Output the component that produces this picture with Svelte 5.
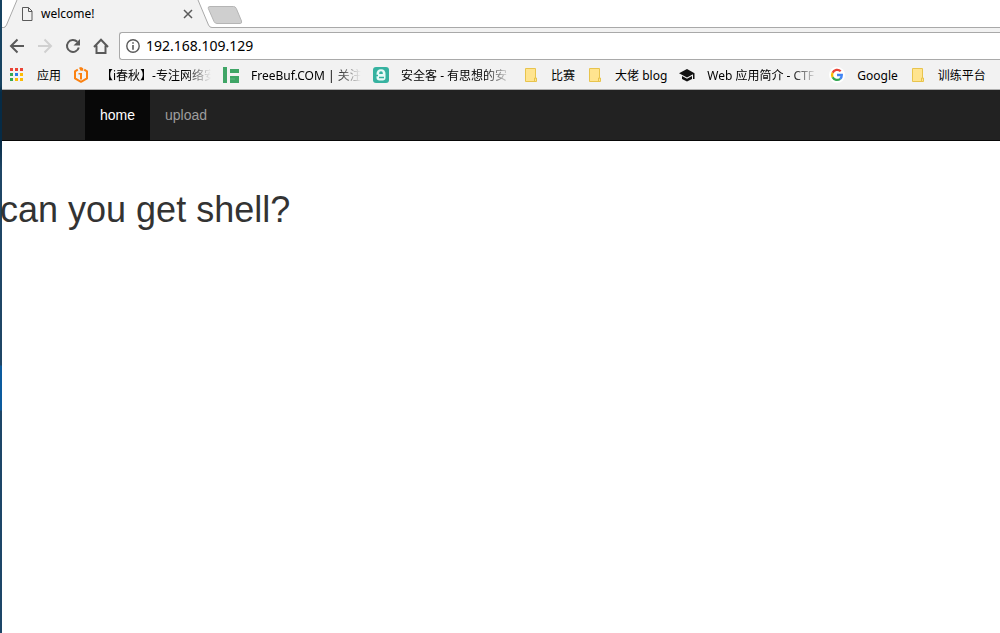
<script>
  const bookmarks = [
    { icon: 'apps', label: '应用' },
    { icon: 'ichunqiu', label: '【i春秋】-专注网络安', long: true },
    { icon: 'freebuf', label: 'FreeBuf.COM | 关注', long: true },
    { icon: 'anquanke', label: '安全客 - 有思想的安', long: true },
    { icon: 'folder', label: '比赛' },
    { icon: 'folder', label: '大佬 blog' },
    { icon: 'cap', label: 'Web 应用简介 - CTF', long: true },
    { icon: 'google', label: 'Google' },
    { icon: 'folder', label: '训练平台' }
  ];
  const dots = ['#ea4335', '#ea4335', '#ea4335', '#34a853', '#2b7de9', '#fbbc05', '#34a853', '#fbbc05', '#fbbc05'];
  let address = $state('192.168.109.129');
</script>

<div class="window">
  <div class="desktop-edge"></div>

  <div class="tabs">
    <svg width="17" height="28" viewBox="0 0 17 28">
      <path d="M0 27.500H1.500Q3.500 27.500 4.500 25L14.500 1Q15 0 17 0V28H0Z" fill="#f2f2f2" />
      <path d="M0 27.500H1.500Q3.500 27.500 4.500 25L15 0" fill="none" stroke="#a9a9a9" />
    </svg>
    <div class="tab">
      <svg width="16" height="16" viewBox="0 0 16 16" fill="none" stroke="#5a5a5a">
        <path d="M3.500 1.500H9.500L13 5V14.500H3.500ZM9.500 1.500V5.500H13" />
      </svg>
      <span class="title">welcome!</span>
      <button aria-label="Close tab">
        <svg width="10" height="10" viewBox="0 0 10 10" stroke="#5a5a5a" stroke-width="1.500"><path d="M1 1L9 9M9 1L1 9" /></svg>
      </button>
    </div>
    <svg width="17" height="28" viewBox="0 0 17 28">
      <path d="M0 0H2L12.500 25Q13.500 27.500 16 27.500H17V28H0Z" fill="#f2f2f2" />
      <path d="M2 0L12.500 25Q13.500 27.500 16 27.500H17" fill="none" stroke="#a9a9a9" />
    </svg>
    <button class="new-tab" aria-label="New tab">
      <svg width="36" height="18" viewBox="0 0 36 18">
        <path d="M3 .5H26.500Q28.500 .5 29.300 2.500L34.500 15Q35.300 17.500 33 17.500H10Q8 17.500 7 15.500L1.300 2.500Q.6 .5 3 .5Z" fill="#cfcfcf" stroke="#b5b5b5" />
      </svg>
    </button>
  </div>

  <div class="toolbar">
    <button aria-label="Back">
      <svg width="16" height="16" viewBox="0 0 16 16" fill="none" stroke="#5a5a5a" stroke-width="2"><path d="M15 8H2.500M8.500 1.500L2 8L8.500 14.500" /></svg>
    </button>
    <button aria-label="Forward" disabled>
      <svg width="16" height="16" viewBox="0 0 16 16" fill="none" stroke="#d0d0d0" stroke-width="2"><path d="M1 8H13.500M7.500 1.500L14 8L7.500 14.500" /></svg>
    </button>
    <button aria-label="Reload">
      <svg width="16" height="16" viewBox="0 0 16 16"><path d="M13.800 9.500A6 6 0 1 1 12.300 3.800" fill="none" stroke="#5a5a5a" stroke-width="2" /><path d="M15 1V7.500H8.500Z" fill="#5a5a5a" /></svg>
    </button>
    <button aria-label="Home">
      <svg width="16" height="16" viewBox="0 0 16 16" fill="none" stroke="#5a5a5a" stroke-width="2"><path d="M1 9L8 1.700L15 9M3.500 7.500V15H12.500V7.500" /></svg>
    </button>
    <label class="address">
      <svg width="14" height="14" viewBox="0 0 14 14"><circle cx="7" cy="7" r="6.200" fill="none" stroke="#5a5a5a" stroke-width="1.400" /><path d="M6.200 3.200H7.800V4.800H6.200ZM6.200 6H7.800V10.800H6.200Z" fill="#5a5a5a" /></svg>
      <input aria-label="Address" bind:value={address} />
    </label>
  </div>

  <div class="bookmarks">
    {#each bookmarks as b}
      <a href="#top">
        <svg width="16" height="16" viewBox="0 0 16 16">
          {#if b.icon === 'apps'}
            {#each dots as color, i}
              <rect x={1 + (i % 3) * 5} y={1 + Math.floor(i / 3) * 5} width="3" height="3" fill={color} />
            {/each}
          {:else if b.icon === 'ichunqiu'}
            <path d="M4.800 2.600L2 4.300V11.400L8 14.800L14 11.400V4.300L11.200 2.600" fill="none" stroke="#fb8212" stroke-width="2" stroke-linejoin="round" />
            <path d="M5.500 6H9V12.500H7V7.500H5.500Z" fill="#fb8212" /><path d="M6 .8L8 0L10.200 1.200V3.800H7.500Z" fill="#fb8212" />
          {:else if b.icon === 'freebuf'}
            <path d="M0 0H4V16H0ZM7 2H16V6H7ZM7 9H16V16H7Z" fill="#3fa566" />
            <path d="M7 12H12" stroke="#62b681" />
          {:else if b.icon === 'anquanke'}
            <rect width="16" height="16" rx="3" fill="#36b2a0" />
            <path d="M8 2.300Q12.500 2.300 12.500 7V11Q12.500 13.600 8 13.600T3.500 11V7Q3.500 2.300 8 2.300Z" fill="#e9fbf8" />
            <path d="M6.200 7V6Q6.200 4.300 8 4.300T9.800 6V7Z" fill="#36b2a0" />
            <path d="M3 8.500H5M6 10.500H11" stroke="#36b2a0" stroke-width="1.400" />
          {:else if b.icon === 'folder'}
            <path d="M2.500 1.500H12.500V11H13.500V14.500H2.500Z" fill="#ffe48f" stroke="#e8c44d" />
            <path d="M11.500 14V11H13" fill="none" stroke="#e8c44d" />
          {:else if b.icon === 'cap'}
            <path d="M8 2L0 6.200L8 10.500L14 7.300V12H15.500V6.200Z" fill="#111" />
            <path d="M3 9V12L8 14.500L13 12V9L8 11.700Z" fill="#111" />
          {:else}
            <circle cx="8" cy="8" r="8" fill="#fff" />
            <g fill="none" stroke-width="2.300">
              <path d="M11.700 4.300A5 5 0 0 0 3.600 5.800" stroke="#ea4335" />
              <path d="M3.600 5.800A5 5 0 0 0 3.600 10.300" stroke="#fbbc05" />
              <path d="M3.600 10.300A5 5 0 0 0 11.200 11.800" stroke="#34a853" />
              <path d="M11.200 11.800A5 5 0 0 0 12.800 8H8" stroke="#4285f4" />
            </g>
          {/if}
        </svg>
        <span class:faded={b.long}>{b.label}</span>
      </a>
    {/each}
  </div>

  <nav>
    <a class="active" href="#home" aria-current="page">home</a>
    <a href="#upload">upload</a>
  </nav>

  <main>
    <h1>can you get shell?</h1>
  </main>
</div>

<style>
  :global(body) {
    margin: 0;
    background: #fff;
  }
  .window {
    position: relative;
    min-height: 100vh;
    box-sizing: border-box;
    padding-left: 2px;
    font-family: "Noto Sans", "Noto Sans CJK SC", sans-serif;
    font-size: 12px;
    color: #000;
  }
  .desktop-edge {
    position: absolute;
    left: 0;
    top: 0;
    bottom: 0;
    width: 2px;
    background: linear-gradient(#174361 0 85px, #062b46 92px 140px, #1f4666 170px 365px, #0c5b9e 366px 410px, #1d4668 411px);
  }
  button {
    display: flex;
    padding: 0;
    border: 0;
    background: none;
  }
  svg {
    flex: none;
    display: block;
  }
  a {
    text-decoration: none;
    color: inherit;
  }
  .tabs {
    display: flex;
    height: 28px;
    background: linear-gradient(#fff 27px, #a9a9a9 27px);
  }
  .tab {
    display: flex;
    align-items: center;
    width: 177px;
    background: #f2f2f2;
  }
  .tab .title {
    flex: 1;
    margin-left: 6px;
    line-height: 16px;
  }
  .tab button {
    margin-right: 3px;
  }
  .new-tab {
    align-self: flex-start;
    margin: 6px 0 0 -6px;
  }
  .toolbar {
    display: flex;
    align-items: center;
    gap: 12px;
    height: 36px;
    padding-left: 7px;
    background: #f2f2f2;
  }
  .address {
    flex: 1;
    display: flex;
    align-items: center;
    gap: 6px;
    height: 26px;
    margin-left: -2px;
    padding-left: 6px;
    border: 1px solid #a9a9a9;
    border-right: 0;
    border-radius: 3px 0 0 3px;
    background: #fff;
  }
  .address input {
    flex: 1;
    min-width: 0;
    height: 24px;
    box-sizing: border-box;
    padding: 0 0 2px;
    border: 0;
    outline: 0;
    background: none;
    font: inherit;
    font-size: 14px;
  }
  .bookmarks {
    display: flex;
    gap: 12px;
    height: 25px;
    padding-left: 7px;
    overflow: hidden;
    background: #f2f2f2;
    border-bottom: 1px solid #b0b0b0;
  }
  .bookmarks a {
    display: flex;
    flex: none;
    align-items: center;
    gap: 12px;
    height: 22px;
  }
  .bookmarks span {
    white-space: nowrap;
  }
  .bookmarks .faded {
    width: 110px;
    overflow: hidden;
    mask-image: linear-gradient(to right, #000 84px, transparent 110px);
  }
  nav {
    display: flex;
    height: 50px;
    padding-left: 83px;
    background: #222;
    border-bottom: 1px solid #080808;
    font: 14px/20px "Liberation Sans", Arial, sans-serif;
  }
  nav a {
    padding: 15px;
    color: #9d9d9d;
  }
  nav .active {
    background: #080808;
    color: #fff;
  }
  main {
    position: relative;
    margin-left: -2px;
    padding-top: 49px;
  }
  h1 {
    margin: 0;
    font: 500 36px/40px "Liberation Sans", Arial, sans-serif;
    color: #333;
  }
</style>
